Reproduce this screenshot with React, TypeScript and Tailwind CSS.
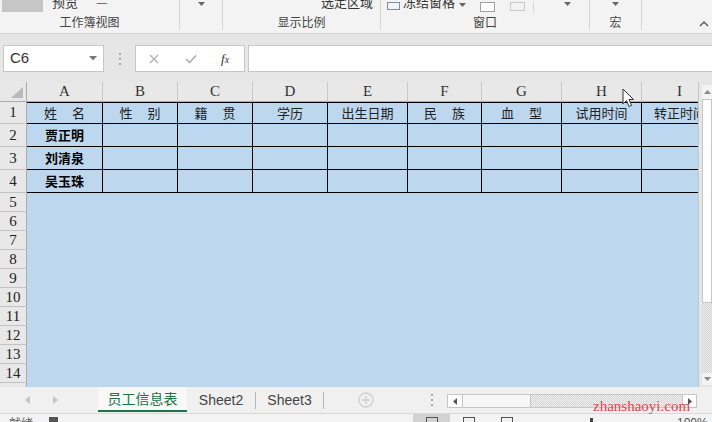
import React from 'react';

const CJK = "font-['Noto_Sans_CJK_SC',sans-serif]";
const SERIF = "font-['Liberation_Serif',serif]";

type Col = { key: string; w: number; title: string[] };

const COLS: Col[] = [
  { key: 'A', w: 76, title: ['姓', '名'] },
  { key: 'B', w: 75, title: ['性', '别'] },
  { key: 'C', w: 75, title: ['籍', '贯'] },
  { key: 'D', w: 75, title: ['学历'] },
  { key: 'E', w: 80, title: ['出生日期'] },
  { key: 'F', w: 74, title: ['民', '族'] },
  { key: 'G', w: 80, title: ['血', '型'] },
  { key: 'H', w: 80, title: ['试用时间'] },
  { key: 'I', w: 76, title: ['转正时间'] },
];

const NAMES = ['贾正明', '刘清泉', '吴玉珠'];

// row heights as they show in the sheet
const DATA_ROWS = [22, 23, 23, 23];

function Caret({ className = '' }: { className?: string }) {
  return (
    <svg className={className} width="7" height="4" viewBox="0 0 7 4">
      <path d="M0 0 H7 L3.5 4 Z" fill="#666" />
    </svg>
  );
}

function RowHead({ n, h }: { n: number | string; h: number }) {
  return (
    <div
      className={`w-[27px] shrink-0 bg-[#e8e8e8] border-b border-r border-[#c3c3c3] border-r-[#ababab] flex items-center justify-center text-[15px] text-[#222] ${SERIF}`}
      style={{ height: h }}
    >
      {n}
    </div>
  );
}

function Ribbon() {
  const top = 'flex items-end h-[12px] overflow-hidden leading-[20px] text-[13px] text-[#333]';
  const label = `text-center mt-[2px] leading-[16px] text-[12px] text-[#444] ${CJK}`;
  return (
    <div className={`h-[34px] bg-[#f3f3f3] border-b border-[#d4d4d4] flex ${CJK}`}>
      <div className="w-[180px] h-[30px] border-r border-[#d6d6d6]">
        <div className={top}>
          <div className="ml-[2px] w-[41px] h-[12px] bg-[#c6c6c6]" />
          <span className="ml-[9px]">预览</span>
          <span className="ml-[18px] text-[#555]">—</span>
        </div>
        <div className={label}>工作簿视图</div>
      </div>
      <div className="w-[43px] h-[30px] border-r border-[#d6d6d6]">
        <div className="h-[12px] flex items-start justify-center pt-[2px]">
          <Caret />
        </div>
      </div>
      <div className="w-[158px] h-[30px] border-r border-[#d6d6d6]">
        <div className={`${top} justify-end pr-[7px]`}>
          <span>选定区域</span>
        </div>
        <div className={label}>显示比例</div>
      </div>
      <div className="w-[209px] h-[30px] border-r border-[#d6d6d6]">
        <div className={top}>
          <div className="ml-[6px] w-[13px] h-[8px] border border-[#7a8fa8] mb-[2px]" />
          <span className="ml-[3px]">冻结窗格</span>
          <Caret className="ml-[4px] mb-[5px]" />
          <div className="ml-[14px] w-[15px] h-[10px] border border-[#a0a0a0] bg-white" />
          <div className="ml-[15px] w-[15px] h-[9px] border border-[#c8c8c8] mb-[1px]" />
          <div className="ml-[8px] w-px h-[10px] bg-[#d6d6d6]" />
          <Caret className="ml-[30px] mb-[6px]" />
        </div>
        <div className={label}>窗口</div>
      </div>
      <div className="w-[52px] h-[30px] border-r border-[#d6d6d6]">
        <div className="h-[12px] flex items-start justify-center pt-[2px]">
          <Caret />
        </div>
        <div className={label}>宏</div>
      </div>
      <div className="flex-1 flex items-end justify-end pr-[3px] pb-[6px]">
        <svg width="10" height="6" viewBox="0 0 10 6">
          <path d="M1 5 L5 1 L9 5" fill="none" stroke="#555" strokeWidth="1.4" />
        </svg>
      </div>
    </div>
  );
}

function FormulaBar() {
  return (
    <div className="h-[48px] bg-[#e6e6e6] flex items-start pt-[11px] pl-[3px]">
      <div className="w-[101px] h-[27px] bg-white border border-[#c6c6c6] flex items-center justify-between pl-[6px] pr-[6px]">
        <span className="text-[15px] text-[#333] font-['Liberation_Sans',sans-serif]">C6</span>
        <svg width="8" height="5" viewBox="0 0 8 5">
          <path d="M0 0 H8 L4 4.5 Z" fill="#777" />
        </svg>
      </div>
      <div className="w-[31px] h-[27px] flex flex-col items-center justify-center gap-[3px]">
        <div className="w-[2px] h-[2px] bg-[#a9a9a9]" />
        <div className="w-[2px] h-[2px] bg-[#a9a9a9]" />
        <div className="w-[2px] h-[2px] bg-[#a9a9a9]" />
      </div>
      <div className="w-[110px] h-[27px] bg-white border border-[#c6c6c6] flex items-center">
        <svg className="ml-[13px]" width="10" height="10" viewBox="0 0 10 10">
          <path d="M1 1 L9 9 M9 1 L1 9" stroke="#b0b0b0" strokeWidth="1.3" />
        </svg>
        <svg className="ml-[26px]" width="12" height="10" viewBox="0 0 12 10">
          <path d="M1 5 L4.5 8.5 L11 1.5" fill="none" stroke="#b0b0b0" strokeWidth="1.6" />
        </svg>
        <span className={`ml-[24px] italic text-[13px] text-[#333] ${SERIF}`}>
          f<span className="text-[10px]">x</span>
        </span>
      </div>
      <div className="ml-[3px] flex-1 h-[27px] bg-white border border-[#c6c6c6] border-r-0" />
    </div>
  );
}

function ColumnHeader() {
  return (
    <div className="h-[20px] flex bg-[#e8e8e8] border-b border-[#ababab]">
      <div className="w-[27px] shrink-0 border-r border-[#ababab] flex items-end justify-end pr-[3px] pb-[3px]">
        <svg width="12" height="11" viewBox="0 0 12 11">
          <path d="M12 0 V11 H0 Z" fill="#b9b9b9" />
        </svg>
      </div>
      {COLS.map((c) => (
        <div
          key={c.key}
          className={`shrink-0 border-r border-[#c8c8c8] flex items-center justify-center text-[15px] text-[#333] ${SERIF}`}
          style={{ width: c.w }}
        >
          {c.key}
        </div>
      ))}
    </div>
  );
}

function Sheet() {
  return (
    <div className="w-[698px] h-[305px] overflow-hidden bg-[#bdd7ee]">
      <ColumnHeader />
      {DATA_ROWS.map((h, r) => (
        <div key={r} className="flex" style={{ height: h }}>
          <RowHead n={r + 1} h={h} />
          {COLS.map((c, ci) => (
            <div
              key={c.key}
              className={`shrink-0 bg-[#bdd7ee] border-b border-black flex items-center justify-center text-[13px] text-[#222] ${CJK} ${
                ci < COLS.length - 1 ? 'border-r' : ''
              } ${r === 0 ? 'border-t' : ''}`}
              style={{ width: c.w }}
            >
              {r === 0 ? (
                <span className="flex gap-[15px]">
                  {c.title.map((t) => (
                    <span key={t}>{t}</span>
                  ))}
                </span>
              ) : ci === 0 ? (
                <span className="font-bold text-black">{NAMES[r - 1]}</span>
              ) : null}
            </div>
          ))}
        </div>
      ))}
      {[5, 6, 7, 8, 9, 10, 11, 12, 13, 14, 15].map((n) => (
        <div key={n} className="flex h-[19px]">
          <RowHead n={n} h={19} />
          <div className="flex-1 bg-[#bdd7ee]" />
        </div>
      ))}
    </div>
  );
}

function VScroll() {
  return (
    <div className="w-[14px] h-[305px] bg-[#e6e6e6] border-l border-[#c6c6c6] pl-[3px] pt-[3px]">
      <div className="w-[10px] h-[300px] flex flex-col bg-[#f3f3f3]">
        <div className="h-[14px] flex items-center justify-center">
          <svg width="7" height="4" viewBox="0 0 7 4">
            <path d="M0 4 L3.5 0 L7 4 Z" fill="#888" />
          </svg>
        </div>
        <div className="h-[204px] bg-white border border-[#c6c6c6]" />
        <div className="flex-1 bg-[repeating-conic-gradient(#cfcfcf_0_25%,#f2f2f2_0_50%)] bg-[length:2px_2px]" />
        <div className="h-[12px] flex items-center justify-center">
          <svg width="7" height="4" viewBox="0 0 7 4">
            <path d="M0 0 L3.5 4 L7 0 Z" fill="#888" />
          </svg>
        </div>
      </div>
    </div>
  );
}

function TabBar() {
  return (
    <div className="h-[26px] bg-[#f0f0f0] flex items-start">
      <div className="w-[98px] h-[26px] flex items-center">
        <svg className="ml-[25px]" width="5" height="8" viewBox="0 0 5 8">
          <path d="M5 0 V8 L0 4 Z" fill="#c4c4c4" />
        </svg>
        <svg className="ml-[23px]" width="5" height="8" viewBox="0 0 5 8">
          <path d="M0 0 V8 L5 4 Z" fill="#c4c4c4" />
        </svg>
      </div>
      <div className={`w-[89px] h-[25px] bg-[#f8f8f8] border-b-[2px] border-[#217346] flex items-center justify-center text-[14px] text-[#217346] ${CJK}`}>
        员工信息表
      </div>
      <div className="h-[26px] flex items-center font-['Liberation_Sans',sans-serif] text-[14px] text-[#444]">
        <div className="w-[69px] h-[17px] border-r border-[#b5b5b5] flex items-center justify-center">Sheet2</div>
        <div className="w-[68px] h-[17px] border-r border-[#b5b5b5] flex items-center justify-center">Sheet3</div>
      </div>
      <div className="h-[26px] flex items-center">
        <svg className="ml-[34px]" width="16" height="16" viewBox="0 0 16 16">
          <circle cx="8" cy="8" r="7" fill="none" stroke="#cfcfcf" strokeWidth="1.3" />
          <path d="M8 4 V12 M4 8 H12" stroke="#cfcfcf" strokeWidth="1.4" />
        </svg>
        <div className="ml-[57px] flex flex-col gap-[3px]">
          <div className="w-[2px] h-[2px] bg-[#a9a9a9]" />
          <div className="w-[2px] h-[2px] bg-[#a9a9a9]" />
          <div className="w-[2px] h-[2px] bg-[#a9a9a9]" />
        </div>
      </div>
      <div className="ml-[14px] mt-[7px] w-[250px] h-[14px] flex border border-[#c6c6c6] bg-white">
        <div className="w-[15px] flex items-center justify-center border-r border-[#c6c6c6]">
          <svg width="4" height="7" viewBox="0 0 4 7">
            <path d="M4 0 V7 L0 3.5 Z" fill="#555" />
          </svg>
        </div>
        <div className="w-[68px] bg-[#f7f7f7] border-r border-[#c6c6c6]" />
        <div className="flex-1 bg-[repeating-conic-gradient(#d3d3d3_0_25%,#f2f2f2_0_50%)] bg-[length:2px_2px]" />
        <div className="w-[14px] flex items-center justify-center border-l border-[#c6c6c6]">
          <svg width="4" height="7" viewBox="0 0 4 7">
            <path d="M0 0 V7 L4 3.5 Z" fill="#555" />
          </svg>
        </div>
      </div>
    </div>
  );
}

function StatusBar() {
  return (
    <div className={`h-[9px] bg-[#f3f3f3] border-t border-[#d9d9d9] flex items-start overflow-hidden ${CJK}`}>
      <span className="ml-[9px] mt-[2px] text-[12px] leading-[14px] text-[#666]">就绪</span>
      <div className="ml-[16px] mt-[3px] w-[9px] h-[6px] bg-[#555]" />
      <div className="ml-[355px] w-[37px] h-[9px] bg-[#d2d2d2] flex justify-center pt-[3px]">
        <div className="w-[12px] h-[6px] border border-[#555] border-b-0" />
      </div>
      <div className="ml-[13px] mt-[3px] w-[12px] h-[6px] border border-[#555] border-b-0" />
      <div className="ml-[26px] mt-[3px] w-[12px] h-[6px] border border-[#555] border-b-0" />
      <div className="ml-[77px] mt-[4px] w-[3px] h-[5px] bg-[#444]" />
      <span className="ml-[84px] mt-[2px] text-[12px] leading-[14px] text-[#555] font-['Liberation_Sans',sans-serif]">100%</span>
    </div>
  );
}

export default function App() {
  return (
    <div className="w-[712px] h-[422px] overflow-hidden relative bg-[#e6e6e6]">
      <Ribbon />
      <FormulaBar />
      <div className="flex">
        <Sheet />
        <VScroll />
      </div>
      <TabBar />
      <StatusBar />

      {/* mouse pointer over column H header */}
      <svg className="absolute left-[622px] top-[88px]" width="13" height="20" viewBox="0 0 13 20">
        <path d="M1 1 L1 16 L4.5 12.5 L7 18.5 L9.5 17.5 L7 11.5 L11.5 11.5 Z" fill="white" stroke="#333" strokeWidth="1" />
      </svg>

      {/* site watermark */}
      <span className="absolute left-[593px] top-[395px] text-[15px] text-[#e0454a] font-['Liberation_Serif',serif]">
        zhanshaoyi.com
      </span>
    </div>
  );
}
